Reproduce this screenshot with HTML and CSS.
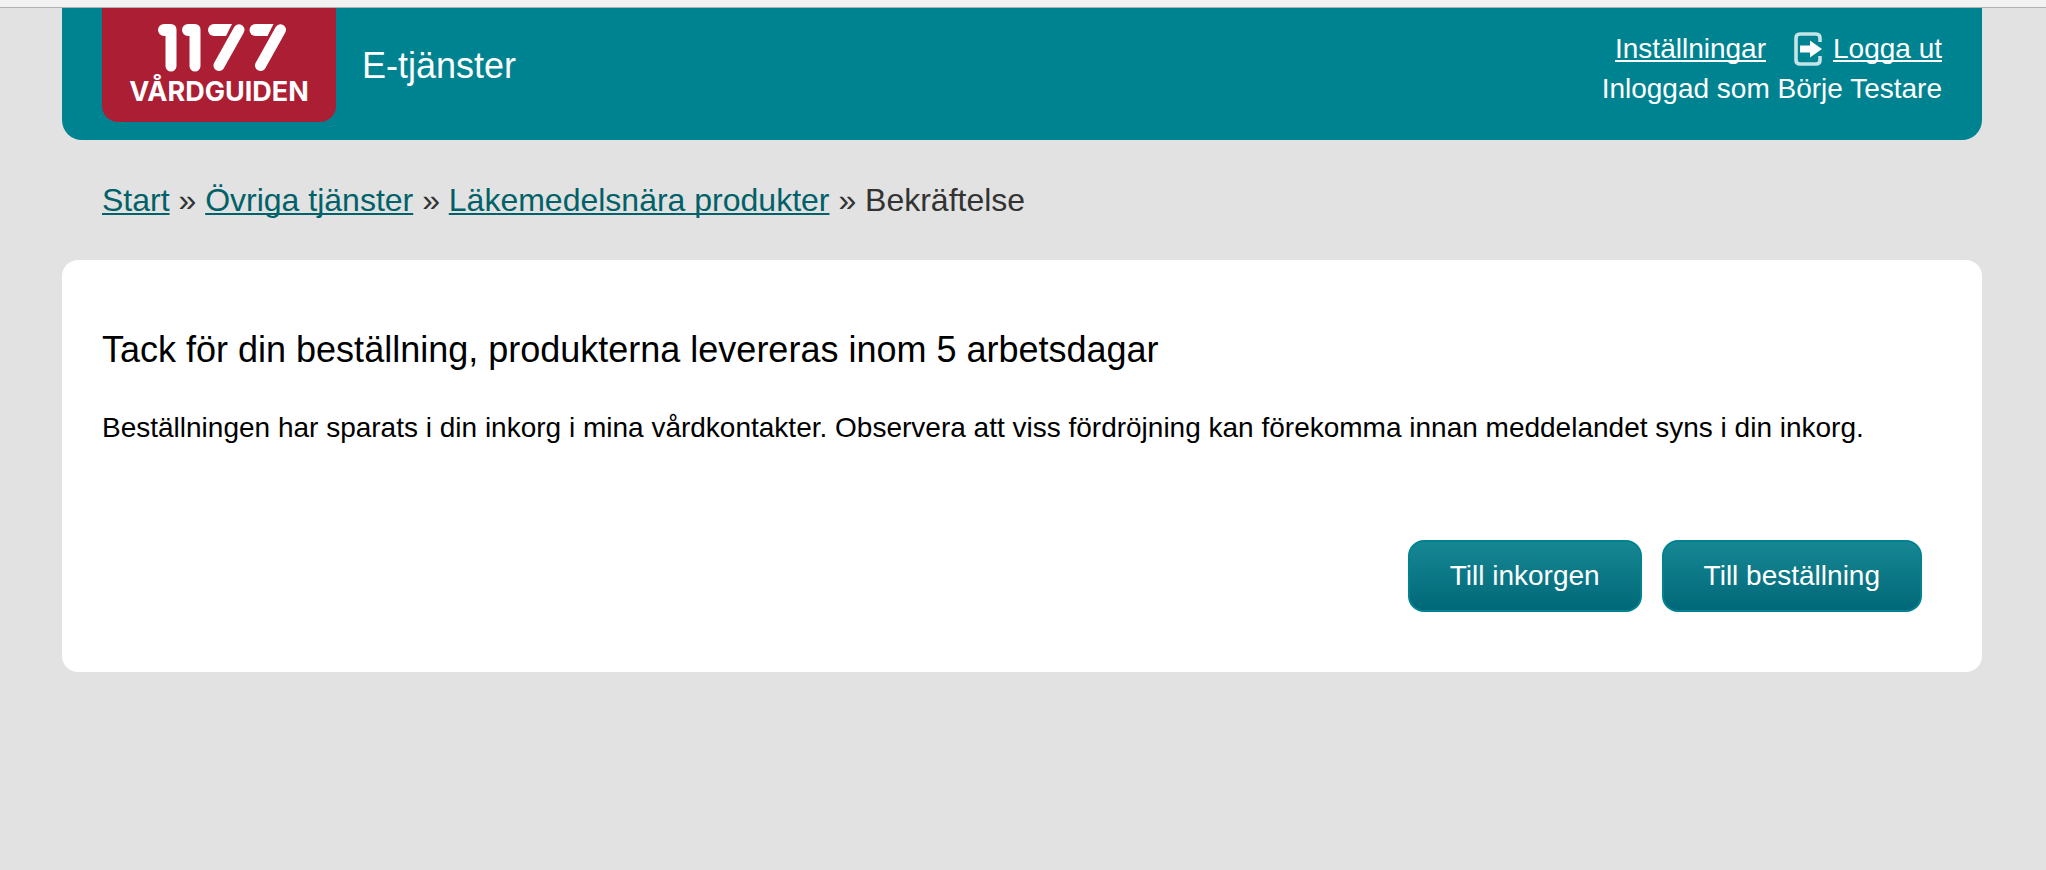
FILE: index.html
```html
<!DOCTYPE html>
<html lang="sv">
<head>
<meta charset="utf-8">
<title>Bekräftelse – 1177 Vårdguiden</title>
<link rel="stylesheet" href="styles.css">
</head>
<body>
<div class="top-strip"></div>
<div class="page">
  <header class="header">
    <a class="logo" href="#" aria-label="1177 Vårdguiden">
      <svg class="logo-number" width="138" height="48" viewBox="-8 0 138 48" aria-hidden="true">
        <g fill="#fff">
          <path d="M6 0H13a5.500 5.500 0 0 1 5.500 5.500V42a5.500 5.500 0 0 1-11 0V12H6A6 6 0 0 1 6 0z"/>
          <path d="M30 0H37a5.500 5.500 0 0 1 5.500 5.500V42a5.500 5.500 0 0 1-11 0V12H30A6 6 0 0 1 30 0z"/>
          <path d="M56 0H74L68 12H56A6 6 0 0 1 56 0z"/>
          <path d="M97.500 0H115.500L109.500 12H97.500A6 6 0 0 1 97.500 0z"/>
        </g>
        <g fill="none" stroke="#fff" stroke-width="11" stroke-linecap="round">
          <path d="M81 5.700L61 41.500"/>
          <path d="M122.500 5.700L102.500 41.500"/>
        </g>
      </svg>
      <span class="logo-name">VÅRDGUIDEN</span>
    </a>
    <div class="service">E-tjänster</div>
    <div class="account">
      <div class="account-links">
        <a href="#">Inställningar</a>
        <span class="logout">
          <svg width="28" height="34" viewBox="0 0 28 34" aria-hidden="true">
            <path d="M26 10V6Q26 2 22 2H6Q2 2 2 6V28Q2 32 6 32H22Q26 32 26 28V24" fill="none" stroke="#c4e4e8" stroke-width="3.600"/>
            <path d="M6 13.500H16V8.500L28 17L16 25.500V20.500H6z" fill="#fff"/>
          </svg>
          <a href="#">Logga ut</a>
        </span>
      </div>
      <div>Inloggad som Börje Testare</div>
    </div>
  </header>
  <nav class="breadcrumb" aria-label="Brödsmulor">
    <a href="#">Start</a> » <a href="#">Övriga tjänster</a> » <a href="#">Läkemedelsnära produkter</a> » Bekräftelse
  </nav>
  <main class="card">
    <h1>Tack för din beställning, produkterna levereras inom 5 arbetsdagar</h1>
    <p>Beställningen har sparats i din inkorg i mina vårdkontakter. Observera att viss fördröjning kan förekomma innan meddelandet syns i din inkorg.</p>
    <div class="actions">
      <button type="button">Till inkorgen</button>
      <button type="button">Till beställning</button>
    </div>
  </main>
</div>
</body>
</html>
```
FILE: styles.css
```css
* {
  box-sizing: border-box;
}

body {
  margin: 0;
  background: #e2e2e2;
  color: #000;
  font-family: "Liberation Sans", Arial, sans-serif;
  font-size: 28px;
  line-height: 40px;
}

a {
  text-decoration-thickness: 2px;
  text-underline-offset: 2px;
  text-decoration-skip-ink: none;
}

.top-strip {
  height: 8px;
  background: #f2f2f2;
  border-bottom: 1px solid #b2b2b2;
}

.page {
  padding: 0 64px 40px 62px;
}

.header {
  display: flex;
  align-items: flex-start;
  padding: 0 40px 18px;
  border-radius: 0 0 20px 20px;
  background: #008391;
  color: #fff;
}

.header a {
  color: #fff;
}

.logo {
  display: flex;
  flex-direction: column;
  align-items: center;
  width: 234px;
  padding: 16px 0 14px;
  border-radius: 0 0 16px 16px;
  background: #ac1e34;
  text-decoration: none;
}

.logo-name {
  padding-top: 4px;
  font-family: Inter, "Open Sans", sans-serif;
  font-size: 27px;
  font-weight: 700;
  line-height: 32px;
}

.service {
  padding: 36px 0 0 26px;
  font-size: 36px;
  line-height: 44px;
}

.account {
  margin-left: auto;
  padding-top: 21px;
  text-align: right;
}

.account-links {
  display: flex;
  justify-content: flex-end;
  gap: 28px;
}

.logout {
  display: flex;
  align-items: center;
  gap: 11px;
}

.breadcrumb {
  padding: 40px;
  color: #333;
  font-size: 32px;
}

.breadcrumb a {
  color: #006168;
}

.card {
  padding: 68px 40px 60px;
  border-radius: 16px;
  background: #fff;
}

.card h1 {
  margin: 0;
  font-size: 36px;
  font-weight: 400;
  line-height: 44px;
}

.card p {
  margin: 36px 0 92px;
}

.actions {
  display: flex;
  justify-content: flex-end;
  gap: 20px;
  padding-right: 20px;
}

.actions button {
  height: 72px;
  padding: 0 40px;
  border: 2px solid #00838f;
  border-radius: 16px;
  background: linear-gradient(#178794, #006878);
  color: #fff;
  font: inherit;
}
```
